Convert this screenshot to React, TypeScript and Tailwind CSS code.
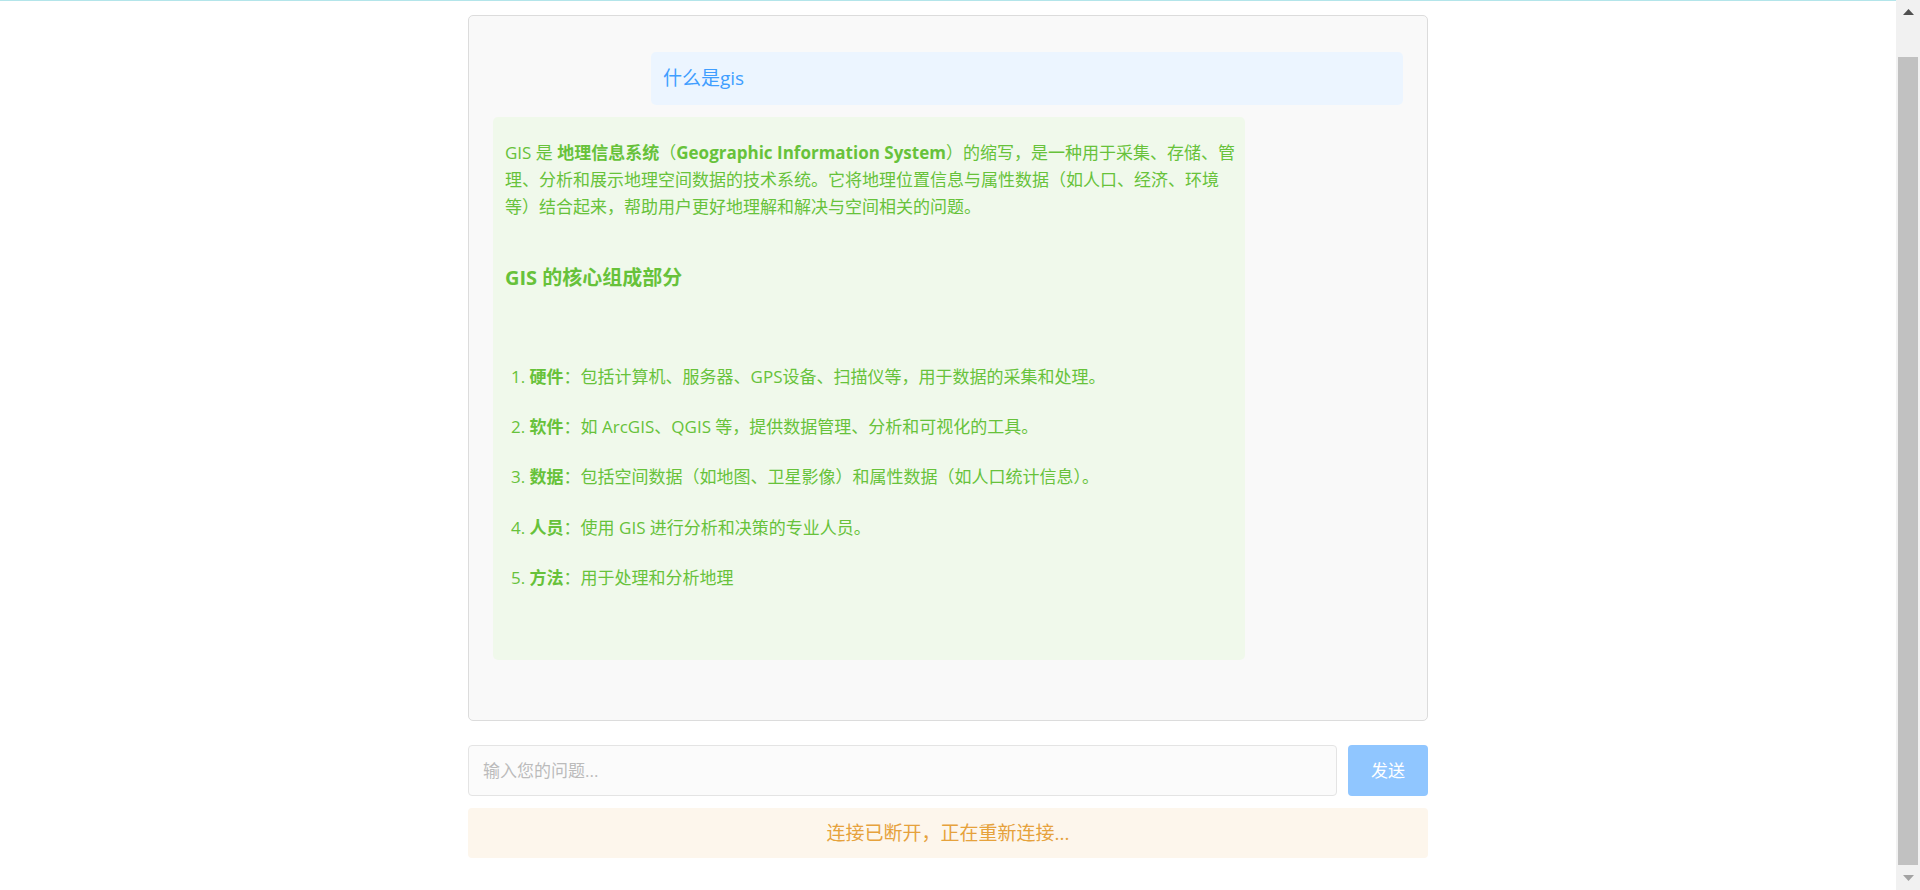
const items: { n: string; b: string; t: string }[] = [
  { n: "1.", b: "硬件", t: "：包括计算机、服务器、GPS设备、扫描仪等，用于数据的采集和处理。" },
  { n: "2.", b: "软件", t: "：如 ArcGIS、QGIS 等，提供数据管理、分析和可视化的工具。" },
  { n: "3.", b: "数据", t: "：包括空间数据（如地图、卫星影像）和属性数据（如人口统计信息）。" },
  { n: "4.", b: "人员", t: "：使用 GIS 进行分析和决策的专业人员。" },
  { n: "5.", b: "方法", t: "：用于处理和分析地理" },
];

function FakeScrollbar() {
  return (
    <div className="flex h-full w-[24px] shrink-0 flex-col bg-[#f1f1f1]">
      <div className="flex h-[24px] items-center justify-center">
        <svg width="11" height="6" viewBox="0 0 11 6">
          <polygon points="5.5,0 11,6 0,6" fill="#505050" />
        </svg>
      </div>
      <div className="flex flex-1 flex-col">
        <div className="mx-[2px] mt-[33px] h-[808px] bg-[#c1c1c1]" />
      </div>
      <div className="flex h-[24px] items-center justify-center">
        <svg width="11" height="6" viewBox="0 0 11 6">
          <polygon points="0,0 11,0 5.5,6" fill="#a3a3a3" />
        </svg>
      </div>
    </div>
  );
}

export default function App() {
  return (
    <div className="flex h-screen overflow-hidden bg-white font-[family-name:'Open_Sans','Noto_Sans_CJK_SC',sans-serif]">
      <div className="flex min-w-0 flex-1 flex-col">
        <div className="h-px shrink-0 bg-[#b3e5ea]" />
        <div className="flex justify-center">
          <div className="flex w-[960px] flex-col pt-[14px]">
            <div className="flex h-[706px] flex-col gap-[12px] overflow-hidden rounded-[5px] border border-[#dcdcdc] bg-[#f9f9f9] px-[24px] pt-[36px]">
              <div className="w-[752px] self-end rounded-[5px] bg-[#ecf5ff] px-[12px] py-[12px] text-[19px] leading-[29px] text-[#409eff]">
                什么是gis
              </div>
              <div className="w-[752px] self-start rounded-[5px] bg-[#f0f9eb] px-[12px] pb-[69px] pt-[22px] text-[17px] leading-[27.2px] text-[#67c23a]">
                <div className="flex flex-col">
                  <span className="whitespace-nowrap">
                    GIS 是 <b className="font-bold">地理信息系统</b>（<b className="font-bold">Geographic Information System</b>）的缩写，是一种用于采集、存储、管
                  </span>
                  <span className="whitespace-nowrap">
                    理、分析和展示地理空间数据的技术系统。它将地理位置信息与属性数据（如人口、经济、环境
                  </span>
                  <span className="whitespace-nowrap">
                    等）结合起来，帮助用户更好地理解和解决与空间相关的问题。
                  </span>
                </div>
                <h3 className="mt-[41px] text-[20px] font-bold leading-[32px]">GIS 的核心组成部分</h3>
                <div className="mt-[69px] flex flex-col gap-[23.2px] pl-[6px]">
                  {items.map((it) => (
                    <div key={it.n} className="whitespace-nowrap">
                      {it.n} <b className="font-bold">{it.b}</b>
                      {it.t}
                    </div>
                  ))}
                </div>
              </div>
            </div>

            <div className="mt-[24px] flex gap-[11px]">
              <input
                type="text"
                placeholder="输入您的问题..."
                className="h-[51px] min-w-0 flex-1 rounded-[4px] border border-[#e4e4e4] bg-[#fbfbfb] px-[14px] text-[17px] text-[#606266] outline-none placeholder:text-[#bbbbbb]"
              />
              <button
                type="button"
                className="h-[51px] w-[80px] rounded-[4px] bg-[#90c6ff] text-[17px] text-white"
              >
                发送
              </button>
            </div>

            <div className="mt-[12px] flex h-[50px] items-center justify-center rounded-[4px] bg-[#fdf6ec] text-[19px] text-[#e6a23c]">
              连接已断开，正在重新连接...
            </div>
          </div>
        </div>
      </div>
      <FakeScrollbar />
    </div>
  );
}
